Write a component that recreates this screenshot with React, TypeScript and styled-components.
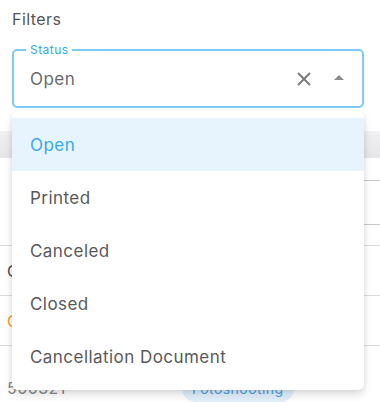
import styled, { createGlobalStyle } from "styled-components";

const GlobalStyle = createGlobalStyle`
  body {
    margin: 0;
    background: #ffffff;
    font-family: Inter, "Noto Sans", sans-serif;
    letter-spacing: 0.45px;
  }
`;

const statuses = ["Open", "Printed", "Canceled", "Closed", "Cancellation Document"];

const App = () => {
  const selected = "Open";

  return (
    <>
      <GlobalStyle />
      <Page>
        <Title>Filters</Title>
        <SelectBox>
          <FloatLabel>Status</FloatLabel>
          <Value>{selected}</Value>
          <Actions>
            <ClearIcon viewBox="0 0 14 14">
              <path d="M1 1 L13 13 M13 1 L1 13" />
            </ClearIcon>
            <ArrowIcon viewBox="0 0 10 5">
              <path d="M0 5 L5 0 L10 5 Z" />
            </ArrowIcon>
          </Actions>
        </SelectBox>

        <Table>
          <HeadRow />
          <Row $height={88}>
            <SubCells>
              <SubCell $height={22} />
              <SubCell $height={43} />
            </SubCells>
          </Row>
          <Row $height={50}>
            <CellText>C</CellText>
          </Row>
          <Row $height={50}>
            <CellText $color="#f0a020">C</CellText>
          </Row>
          <Row $height={84} $last>
            <CellText $color="#8a8a8a">500321</CellText>
            <Chip>Fotoshooting</Chip>
          </Row>
        </Table>

        <Menu>
          {statuses.map((s) => (
            <MenuItem key={s} $active={s === selected}>
              {s}
            </MenuItem>
          ))}
        </Menu>
      </Page>
    </>
  );
};
export default App;

const Page = styled.div`
  position: relative;
  width: 380px;
  height: 402px;
  overflow: hidden;
  padding-top: 7px;
  box-sizing: border-box;
`;

const Title = styled.div`
  margin: 0 12px;
  font-size: 16px;
  line-height: 24px;
  color: #555559;
`;

const SelectBox = styled.div`
  position: relative;
  margin: 18px 16px 0 12px;
  height: 59px;
  box-sizing: border-box;
  border: 2px solid #7ccaf6;
  border-radius: 5px;
  display: flex;
  align-items: center;
  padding: 0 18px 0 16px;
`;

const FloatLabel = styled.span`
  position: absolute;
  top: -9px;
  left: 12px;
  padding: 0 4px;
  background: #ffffff;
  font-size: 12px;
  line-height: 16px;
  color: #35a9f0;
`;

const Value = styled.div`
  flex: 1;
  font-size: 17px;
  color: #69696d;
`;

const Actions = styled.div`
  display: flex;
  align-items: center;
  gap: 23px;
`;

const ClearIcon = styled.svg`
  width: 14px;
  height: 14px;
  fill: none;
  stroke: #7b7b7f;
  stroke-width: 2;
`;

const ArrowIcon = styled.svg`
  width: 10px;
  height: 5px;
  fill: #8c8c90;
  margin-bottom: 2px;
`;

const Table = styled.div`
  margin-top: 23px;
  display: flex;
  flex-direction: column;
`;

const HeadRow = styled.div`
  height: 27px;
  background: linear-gradient(#f1f1f3, #e6e6ea);
`;

const Row = styled.div<{ $height: number; $last?: boolean }>`
  height: ${(p) => p.$height}px;
  flex-shrink: 0;
  box-sizing: border-box;
  border-bottom: ${(p) => (p.$last ? "none" : "1px solid #dcdcde")};
  display: flex;
  align-items: center;
  padding-left: 7px;
`;

const SubCells = styled.div`
  margin-left: auto;
  align-self: flex-start;
  width: 40px;
  display: flex;
  flex-direction: column;
`;

const SubCell = styled.div<{ $height: number }>`
  height: ${(p) => p.$height}px;
  border-bottom: 1px solid #c8c8ca;
`;

const CellText = styled.span<{ $color?: string }>`
  font-size: 16px;
  color: ${(p) => p.$color ?? "#4a4a4e"};
  width: 175px;
`;

const Chip = styled.span`
  padding: 5px 10px;
  border-radius: 14px;
  background: #e2f0fb;
  color: #4aa3e8;
  font-size: 14px;
`;

const Menu = styled.div`
  position: absolute;
  top: 111px;
  left: 12px;
  width: 352px;
  padding: 7px 0;
  background: #ffffff;
  border-radius: 6px;
  box-shadow: 0 5px 10px rgba(0, 0, 0, 0.12), 0 1px 4px rgba(0, 0, 0, 0.08);
`;

const MenuItem = styled.div<{ $active?: boolean }>`
  height: 53px;
  display: flex;
  align-items: center;
  padding-left: 18px;
  font-size: 17px;
  color: ${(p) => (p.$active ? "#35a9f0" : "#59595d")};
  background: ${(p) => (p.$active ? "#e8f4fd" : "transparent")};
`;
